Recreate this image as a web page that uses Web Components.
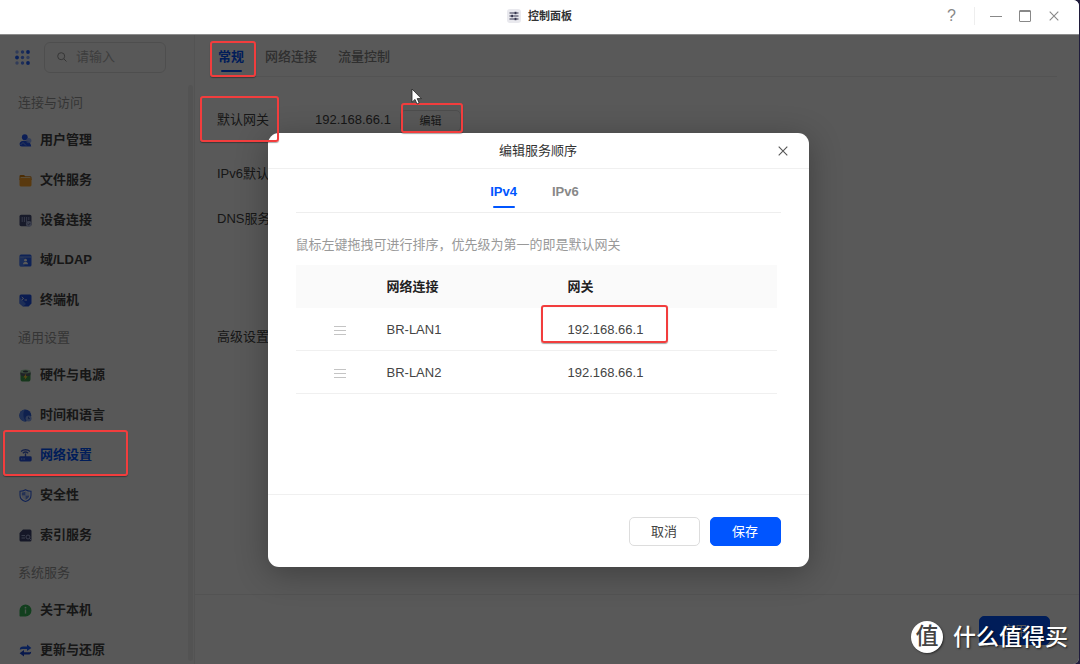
<!DOCTYPE html>
<html lang="zh-CN">
<head>
<meta charset="utf-8">
<title>控制面板</title>
<style>
    body{
        margin: 0;
        background: #201c3c;
        font-family: "Liberation Sans", "Noto Sans CJK SC", sans-serif;
        font-size: 13px;
        line-height: 20px;
        color: #333;
    }
</style>
</head>
<body>
<control-panel></control-panel>

<script>
const ICONS = {
    apps: `<svg viewBox="0 0 15 15" width="15" height="15"><g fill="#1f5eff">
        <circle cx="2" cy="2" r="1.7" opacity=".5"/><circle cx="7.5" cy="2" r="1.7" opacity=".75"/><circle cx="13" cy="2" r="1.9"/>
        <circle cx="2" cy="7.5" r="1.9"/><circle cx="7.5" cy="7.5" r="1.7" opacity=".75"/><circle cx="13" cy="7.5" r="1.7" opacity=".5"/>
        <circle cx="2" cy="13" r="1.7" opacity=".5"/><circle cx="7.5" cy="13" r="1.7" opacity=".75"/><circle cx="13" cy="13" r="1.9"/></g></svg>`,
    search: `<svg viewBox="0 0 10 10" width="10" height="10" fill="none" stroke="#999"><circle cx="4.2" cy="4.2" r="3.5"/><path d="M6.8 6.8L9.5 9.5"/></svg>`,
    panel: `<svg viewBox="0 0 14 14" width="14" height="14"><rect width="14" height="14" rx="3" fill="#e9e9ee"/>
        <g stroke="#34344c" stroke-width="1.1"><path d="M2.5 4H11.5M2.5 7H11.5M2.5 10H11.5"/></g>
        <g fill="#34344c"><rect x="7.6" y="2.8" width="1.8" height="2.4"/><rect x="4.2" y="5.8" width="1.8" height="2.4"/><rect x="7.6" y="8.8" width="1.8" height="2.4"/></g></svg>`,
    user: `<svg viewBox="0 0 13 13" width="13" height="13"><circle cx="5.8" cy="3.2" r="2.9" fill="#2358f5"/>
        <path d="M.6 10.2C.6 7.5 3 6.8 5.8 6.8S11.8 8 12.2 12.5H2.8A2.2 2.2 0 0 1 .6 10.2z" fill="#2358f5"/>
        <circle cx="9.8" cy="6.6" r="2.6" fill="#7fa4ff" opacity=".8"/><path d="M1.5 11L4 8.5L7 11.5" fill="none" stroke="#7fa4ff"/></svg>`,
    folder: `<svg viewBox="0 0 13 13" width="13" height="13"><path d="M.5 2.3A1.3 1.3 0 0 1 1.8 1H5l1.3 1.2H11.2a1.3 1.3 0 0 1 1.3 1.3V6H.5z" fill="#d98011"/>
        <rect x="1.5" y="3" width="10" height="3" fill="#ffe0a3"/><rect x=".5" y="4" width="12" height="8.4" rx="1.3" fill="#ffa42b"/></svg>`,
    device: `<svg viewBox="0 0 13 13" width="13" height="13"><rect x=".5" y=".8" width="12" height="11.4" rx="1.6" fill="#454d78"/>
        <path d="M3.2 3V8M5.4 3V8M7.6 3V8M9.8 3V6" stroke="#9aa4d0"/><circle cx="9.8" cy="9.8" r="2.9" fill="#a9b4dc"/><path d="M8.5 10L9.6 11L11.2 9" fill="none" stroke="#454d78" stroke-width=".8"/></svg>`,
    domain: `<svg viewBox="0 0 13 13" width="13" height="13"><rect x=".5" y=".5" width="12" height="12" rx="1.5" fill="#2a62f5"/><rect x=".5" y="3" width="5" height="9.5" rx="1.5" fill="#5f93ff" opacity=".7"/>
        <path d="M.5 3H12.5" stroke="#8fb1ff"/><circle cx="6.5" cy="6.2" r="1.4" fill="#fff"/><path d="M4 10.2C4 8.3 5 7.9 6.5 7.9S9 8.3 9 10.2z" fill="#fff"/></svg>`,
    terminal: `<svg viewBox="0 0 13 13" width="13" height="13"><path d="M2 .5H11A1.5 1.5 0 0 1 12.5 2V9.5L9.5 12.5H4L.5 9.5V2A1.5 1.5 0 0 1 2 .5z" fill="#1e50e8"/>
        <path d="M.5 3V9.5L4 12.5L7 10z" fill="#6c9aff" opacity=".7"/><path d="M2.7 3L4.6 4.5L2.7 6M5.5 6H8" fill="none" stroke="#fff" stroke-width=".9"/></svg>`,
    battery: `<svg viewBox="0 0 13 13" width="13" height="13"><rect x="1.5" y="2" width="10" height="10.5" rx="2.6" fill="#3f9d50"/><rect x="1.5" y="2" width="10" height="5" rx="2" fill="#5a6470"/>
        <ellipse cx="6.5" cy="2.5" rx="5" ry="1.9" fill="#a6d9b0"/><ellipse cx="6.5" cy="2.5" rx="2.6" ry=".9" fill="#44525c"/><path d="M7.2 4.6L4.4 8.4H6.2L5.6 11L8.6 7.2H6.8z" fill="#ffd23c"/></svg>`,
    globe: `<svg viewBox="0 0 13 13" width="13" height="13"><circle cx="6.3" cy="6.5" r="6" fill="#2c5fe0"/><path d="M.4 6.5A6 6 0 0 1 6 .5C3.5 4 4 9 7 12.4A6 6 0 0 1 .4 6.5z" fill="#5c8cf5"/>
        <circle cx="9.6" cy="9.4" r="3" fill="#8aabf5"/><path d="M9.5 7.8V9.6H10.9" fill="none" stroke="#2450c0" stroke-width=".8"/></svg>`,
    router: `<svg viewBox="0 0 13 13" width="13" height="13"><path d="M2 2.4C4.4 .2 8.6 .2 11 2.4M3.8 4.2C5.3 2.9 7.7 2.9 9.2 4.2" fill="none" stroke="#3b5fd0" stroke-width="1.3"/>
        <path d="M6.5 4.4V8" stroke="#3b5fd0" stroke-width="1.4"/><rect x=".3" y="7.3" width="12.4" height="5.2" rx="1.4" fill="#2555e6"/><path d="M2 10H3.4M4.4 10H5.8" stroke="#b4c9ff" stroke-width="1.2"/></svg>`,
    shield: `<svg viewBox="0 0 13 13" width="13" height="13"><path d="M6.5 .7C8.2 1.8 10 2.2 12 2.3V6.2C12 9.4 9.5 11.6 6.5 12.5C3.5 11.6 1 9.4 1 6.2V2.3C3 2.2 4.8 1.8 6.5 .7z" fill="none" stroke="#3566f0" stroke-width="1.1"/>
        <path d="M6.5 2.6V6.5H2.8V3.6C4.2 3.5 5.4 3.2 6.5 2.6zM6.5 6.5H10.2C10.1 8.6 8.5 10 6.5 10.7z" fill="#6a90f0"/><path d="M6.5 2.6C7.6 3.2 8.8 3.5 10.2 3.6V6.5H6.5zM6.5 10.7C4.5 10 2.9 8.6 2.8 6.5H6.5z" fill="#a9c0ff" opacity=".5"/></svg>`,
    index: `<svg viewBox="0 0 13 13" width="13" height="13"><path d="M4 .5H11A1.5 1.5 0 0 1 12.5 2V11A1.5 1.5 0 0 1 11 12.5H2A1.5 1.5 0 0 1 .5 11V4z" fill="#3c4470"/>
        <path d="M2.5 6.6H6M2.5 9H6" stroke="#aab3dc"/><circle cx="9" cy="8" r="2" fill="none" stroke="#aab3dc"/><path d="M10.4 9.5L12 11" stroke="#aab3dc"/></svg>`,
    about: `<svg viewBox="0 0 13 13" width="13" height="13"><path d="M6.5 .5A6 6 0 1 1 6.5 12.5H1.2A.7 .7 0 0 1 .5 11.8V6.5A6 6 0 0 1 6.5 .5z" fill="#35b558"/><circle cx="6.5" cy="3.7" r=".9" fill="#d5f5dc"/><path d="M6.5 5.4V9.6" stroke="#d5f5dc" stroke-width="1.3"/></svg>`,
    update: `<svg viewBox="0 0 13 13" width="13" height="13"><path d="M.8 5.8C.8 3.6 2 2.6 4.2 2.6H8V.5L12.4 3.9L8 7V4.9H4.2C2.6 4.9 1.7 5 .8 5.8z" fill="#1f5eff"/>
        <path d="M12.2 7.4C12.2 9.6 11 10.5 8.8 10.5H5V12.6L.6 9.3L5 6.1V8.2H8.8C10.4 8.2 11.3 8.1 12.2 7.4z" fill="#1746d8"/></svg>`,
    minimize: `<svg viewBox="0 0 12 12" width="12" height="12"><path d="M0 6.5H12" stroke="#888"/></svg>`,
    maximize: `<svg viewBox="0 0 12 12" width="12" height="12" fill="none" stroke="#888"><rect x=".5" y=".5" width="11" height="11" rx=".5"/><path d="M.5 1.5H11.5"/></svg>`,
    close: `<svg viewBox="0 0 10 10" width="10" height="10"><path d="M.7 .7L9.3 9.3M9.3 .7L.7 9.3" stroke="currentColor" stroke-width="1.1"/></svg>`,
    drag: `<svg viewBox="0 0 12 9" width="12" height="9"><path d="M0 .5H12M0 4.5H12M0 8.5H12" stroke="#c4c4c4"/></svg>`,
    pointer: `<svg viewBox="0 0 12 18" width="12" height="18"><path d="M1 1V14.2L4 11.4L6 16L8.2 15L6.2 10.6H10.4z" fill="#fff" stroke="#222" stroke-width=".8"/></svg>`
};

class AppIcon extends HTMLElement {
    constructor(){
        super()
        this._shadowRoot = this.attachShadow({mode: 'open'});
    }

    connectedCallback(){
        this._shadowRoot.innerHTML = `
    <style>
        :host{ display: inline-flex; flex: none; vertical-align: middle; }
        svg{ display: block; }
    </style>
    ${ICONS[this.getAttribute('name')] || ''}`
    }
}

class TitleBar extends HTMLElement {
    constructor(){
        super()
        this._shadowRoot = this.attachShadow({mode: 'open'});
        this._shadowRoot.innerHTML = `
    <style>
        :host{
            display: grid;
            grid-template-columns: 1fr auto 1fr;
            align-items: center;
            height: 35px;
            padding-bottom: 2px;
            background: #fff;
            border-bottom: 1px solid #8c8c8c;
            box-sizing: border-box;
        }
        .title{
            grid-column: 2;
            display: flex;
            align-items: center;
            gap: 7px;
            font-size: 11px;
            font-weight: 600;
        }
        .tools{
            display: flex;
            justify-content: flex-end;
            align-items: center;
            padding-right: 14px;
        }
        button{
            display: flex;
            justify-content: center;
            align-items: center;
            width: 29px;
            height: 24px;
            padding: 0;
            border: 0;
            background: none;
            color: #888;
            font: 16px "Liberation Sans", sans-serif;
        }
        button:last-child{ width: 22px; margin-left: 4px; }
        i{ width: 1px; height: 18px; margin: 0 6px 0 8px; background: #eee; }
    </style>
    <div class="title"><app-icon name="panel"></app-icon><slot></slot></div>
    <div class="tools">
        <button>?</button><i></i>
        <button aria-label="最小化"><app-icon name="minimize"></app-icon></button>
        <button aria-label="最大化"><app-icon name="maximize"></app-icon></button>
        <button aria-label="关闭"><app-icon name="close"></app-icon></button>
    </div>`
    }
}

class NavItem extends HTMLElement {
    constructor(){
        super()
        this._shadowRoot = this.attachShadow({mode: 'open'});
    }

    connectedCallback(){
        this._shadowRoot.innerHTML = `
    <style>
        :host{ display: block; }
        a{
            display: flex;
            align-items: center;
            gap: 8px;
            height: 40px;
            padding-left: 19px;
            color: #444;
            font-weight: 600;
            text-decoration: none;
        }
        :host([active]) a{ color: #0055ff; }
    </style>
    <a href="#"><app-icon name="${this.getAttribute('icon')}"></app-icon><slot></slot></a>`
    }
}

class NavGroup extends HTMLElement {
    constructor(){
        super()
        this._shadowRoot = this.attachShadow({mode: 'open'});
    }

    connectedCallback(){
        this._shadowRoot.innerHTML = `
    <style>
        :host{ display: block; }
        .label{
            padding-left: 18px;
            line-height: 35px;
            color: #999;
        }
    </style>
    <div class="label">${this.getAttribute('label')}</div>
    <slot></slot>`
    }
}

class SideNav extends HTMLElement {
    constructor(){
        super()
        this._shadowRoot = this.attachShadow({mode: 'open'});
        this._shadowRoot.innerHTML = `
    <style>
        :host{
            display: flex;
            flex-direction: column;
            width: 194px;
            flex: none;
            min-height: 0;
            background: #fcfcfc;
            border-right: 1px solid #eee;
        }
        .top{
            display: flex;
            align-items: center;
            gap: 14px;
            height: 50px;
            padding: 0 28px 6px 15px;
            box-sizing: border-box;
            flex: none;
        }
        label{
            display: flex;
            align-items: center;
            gap: 9px;
            flex: 1;
            min-width: 0;
            height: 31px;
            padding: 0 12px;
            border: 1px solid #e0e0e0;
            border-radius: 6px;
            box-sizing: border-box;
        }
        input{
            width: 100%;
            min-width: 0;
            padding: 0;
            border: 0;
            outline: 0;
            background: none;
            font: inherit;
        }
        input::placeholder{ color: #b0b0b0; }
        .list{
            display: flex;
            flex: 1;
            min-height: 0;
        }
        nav{ flex: 1; overflow: hidden; }
        .thumb{
            width: 5px;
            margin: 0 1px 3px 0;
            border-radius: 3px;
            background: #eee;
        }
    </style>
    <div class="top">
        <app-icon name="apps"></app-icon>
        <label><app-icon name="search"></app-icon><input type="text" placeholder="请输入" aria-label="请输入"></label>
    </div>
    <div class="list">
        <nav><slot></slot></nav>
        <div class="thumb"></div>
    </div>`
    }
}

class TabItem extends HTMLElement {
    constructor(){
        super()
        this._shadowRoot = this.attachShadow({mode: 'open'});
        this._shadowRoot.innerHTML = `
    <style>
        :host{ display: flex; }
        button{
            position: relative;
            padding: 2px 0 0;
            border: 0;
            background: none;
            color: #888;
            font: inherit;
            font-weight: var(--tab-weight, 400);
        }
        :host([active]) button{ color: #0055ff; font-weight: 600; }
        :host([active]) button::after{
            content: "";
            position: absolute;
            left: 3px;
            right: 2px;
            bottom: 4px;
            height: 2px;
            border-radius: 1px;
            background: #0055ff;
        }
    </style>
    <button role="tab"><slot></slot></button>`
    }
}

class TabBar extends HTMLElement {
    constructor(){
        super()
        this._shadowRoot = this.attachShadow({mode: 'open'});
        this._shadowRoot.innerHTML = `
    <style>
        :host{
            display: flex;
            gap: 21px;
            height: 43px;
            border-bottom: 1px solid #eee;
        }
    </style>
    <slot></slot>`
    }
}

class SettingRow extends HTMLElement {
    constructor(){
        super()
        this._shadowRoot = this.attachShadow({mode: 'open'});
    }

    connectedCallback(){
        this._shadowRoot.innerHTML = `
    <style>
        :host{
            display: flex;
            align-items: flex-start;
            min-height: 30px;
            line-height: 30px;
            color: #444;
        }
        .label{ width: 98px; }
    </style>
    <div class="label">${this.getAttribute('label')}</div>
    <slot></slot>`
    }
}

class UiButton extends HTMLElement {
    constructor(){
        super()
        this._shadowRoot = this.attachShadow({mode: 'open'});
        this._shadowRoot.innerHTML = `
    <style>
        :host{ display: inline-flex; }
        button{
            width: 71px;
            height: 29px;
            padding: 0;
            border: 1px solid #ddd;
            border-radius: 5px;
            background: #fff;
            color: #444;
            font: inherit;
            line-height: 20px;
        }
        :host([primary]) button{ border-color: #0055ff; background: #0055ff; color: #fff; }
        :host([small]) button{ width: 61px; height: 22px; font-size: 11px; }
    </style>
    <button><slot></slot></button>`
    }
}

class ServiceTable extends HTMLElement {
    constructor(){
        super()
        this._shadowRoot = this.attachShadow({mode: 'open'});
        const rows = [['BR-LAN1', '192.168.66.1'], ['BR-LAN2', '192.168.66.1']];
        this._shadowRoot.innerHTML = `
    <style>
        :host{ display: block; }
        table{
            width: 100%;
            table-layout: fixed;
            border-collapse: separate;
            border-spacing: 0;
        }
        th, td{
            height: 40px;
            padding: 2px 0 0;
            border-bottom: 1px solid #f0f0f0;
            text-align: left;
            color: #444;
        }
        th{ background: #fafafa; border-color: #fafafa; color: #222; }
        .handle{ width: 91px; }
        .name{ width: 181px; }
        td:first-child{ padding-right: 3px; text-align: center; }
    </style>
    <table>
        <thead><tr><th class="handle"></th><th class="name">网络连接</th><th>网关</th></tr></thead>
        <tbody>
            ${rows.map(([name, ip]) => `<tr><td><app-icon name="drag"></app-icon></td><td>${name}</td><td>${ip}</td></tr>`).join('')}
        </tbody>
    </table>`
    }
}

class ModalDialog extends HTMLElement {
    constructor(){
        super()
        this._shadowRoot = this.attachShadow({mode: 'open'});
    }

    connectedCallback(){
        this._shadowRoot.innerHTML = `
    <style>
        :host{
            display: flex;
            justify-content: center;
            align-items: center;
            background: rgba(0, 0, 0, .65);
        }
        .box{
            width: 541px;
            max-width: 100%;
            border-radius: 11px;
            background: #fff;
            box-shadow: 0 6px 32px rgba(0, 0, 0, .3);
        }
        header{
            display: grid;
            grid-template-columns: 1fr auto 1fr;
            align-items: center;
            height: 35px;
            padding: 0 20px;
            border-bottom: 1px solid #f0f0f0;
        }
        h2{
            grid-column: 2;
            margin: 0;
            font-size: 13px;
            font-weight: 400;
        }
        .close{
            justify-self: end;
            padding: 1px;
            border: 0;
            background: none;
            color: #555;
        }
        .body{ min-height: 325px; padding: 0 28px; }
        footer{
            display: flex;
            justify-content: flex-end;
            gap: 10px;
            padding: 22px 28px 21px;
            border-top: 1px solid #f0f0f0;
        }
    </style>
    <div class="box" role="dialog" aria-label="${this.getAttribute('heading')}">
        <header>
            <h2>${this.getAttribute('heading')}</h2>
            <button class="close" aria-label="关闭"><app-icon name="close"></app-icon></button>
        </header>
        <div class="body"><slot></slot></div>
        <footer><slot name="actions"></slot></footer>
    </div>`
    }
}

class MarkBox extends HTMLElement {
    constructor(){
        super()
        this._shadowRoot = this.attachShadow({mode: 'open'});
        this._shadowRoot.innerHTML = `
    <style>
        :host{
            position: absolute;
            box-sizing: border-box;
            border: 2px solid #f23d3d;
            border-radius: 3px;
            box-shadow: 0 1px 1px rgba(0, 0, 0, .35);
            pointer-events: none;
        }
    </style>`
    }
}

class SiteStamp extends HTMLElement {
    constructor(){
        super()
        this._shadowRoot = this.attachShadow({mode: 'open'});
        this._shadowRoot.innerHTML = `
    <style>
        :host{
            display: flex;
            align-items: center;
            gap: 10px;
            color: #fff;
            font-size: 23px;
            font-weight: 500;
            line-height: 32px;
            text-shadow: 1px 1px 2px rgba(0, 0, 0, .7);
        }
        .seal{
            width: 32px;
            height: 32px;
            border-radius: 50%;
            background: #fff;
            color: #444;
            line-height: 31px;
            text-align: center;
            text-shadow: none;
            box-shadow: 1px 1px 2px rgba(0, 0, 0, .5);
        }
    </style>
    <div class="seal">值</div>
    <div><slot></slot></div>`
    }
}

class ControlPanel extends HTMLElement {
    constructor(){
        super()
        this._shadowRoot = this.attachShadow({mode: 'open'});
        this._shadowRoot.innerHTML = `
    <style>
        :host{
            position: relative;
            display: flex;
            flex-direction: column;
            height: 100vh;
            overflow: hidden;
        }
        .window{
            display: flex;
            flex-direction: column;
            flex: 1;
            min-height: 0;
            margin-right: 1px;
            border-radius: 0 6px 6px 0;
            overflow: hidden;
            background: #fff;
        }
        .content{
            position: relative;
            display: flex;
            flex: 1;
            min-height: 0;
        }
        main{
            display: flex;
            flex-direction: column;
            flex: 1;
            min-width: 0;
        }
        main tab-bar{ height: 41px; margin: 0 22px; padding-left: 1px; --tab-weight: 500; }
        .rows{ flex: 1; padding: 28px 22px 0; }
        .rows setting-row{ margin-bottom: 15px; }
        .rows setting-row:first-child{ margin-bottom: 24px; }
        .rows .tall{ min-height: 103px; }
        .rows ui-button{ margin: 5px 0 0 9px; }
        .foot{
            display: flex;
            justify-content: flex-end;
            padding: 21px 29px 19px;
            border-top: 1px solid #eee;
        }
        modal-dialog{ position: absolute; inset: 0; padding-right: 3px; padding-top: 1px; box-sizing: border-box; }
        modal-dialog tab-bar{ justify-content: center; gap: 35px; padding-right: 7px; --tab-weight: 600; }
        .hint{ margin: 22px 0 10px; color: #999; white-space: nowrap; }
        service-table{ margin-right: 4px; }
        .pointer{ position: absolute; left: 411px; top: 88px; }
        site-stamp{ position: absolute; right: 12px; bottom: 11px; }
    </style>
    <div class="window">
        <title-bar>控制面板</title-bar>
        <div class="content">
            <side-nav>
                <nav-group label="连接与访问">
                    <nav-item icon="user">用户管理</nav-item>
                    <nav-item icon="folder">文件服务</nav-item>
                    <nav-item icon="device">设备连接</nav-item>
                    <nav-item icon="domain">域/LDAP</nav-item>
                    <nav-item icon="terminal">终端机</nav-item>
                </nav-group>
                <nav-group label="通用设置">
                    <nav-item icon="battery">硬件与电源</nav-item>
                    <nav-item icon="globe">时间和语言</nav-item>
                    <nav-item icon="router" active>网络设置</nav-item>
                    <nav-item icon="shield">安全性</nav-item>
                    <nav-item icon="index">索引服务</nav-item>
                </nav-group>
                <nav-group label="系统服务">
                    <nav-item icon="about">关于本机</nav-item>
                    <nav-item icon="update">更新与还原</nav-item>
                </nav-group>
            </side-nav>
            <main>
                <tab-bar>
                    <tab-item active>常规</tab-item>
                    <tab-item>网络连接</tab-item>
                    <tab-item>流量控制</tab-item>
                </tab-bar>
                <div class="rows">
                    <setting-row label="默认网关">192.168.66.1<ui-button small>编辑</ui-button></setting-row>
                    <setting-row label="IPv6默认"></setting-row>
                    <setting-row class="tall" label="DNS服务"></setting-row>
                    <setting-row label="高级设置"></setting-row>
                </div>
                <div class="foot"><ui-button primary>应用</ui-button></div>
            </main>
            <modal-dialog heading="编辑服务顺序">
                <tab-bar>
                    <tab-item active>IPv4</tab-item>
                    <tab-item>IPv6</tab-item>
                </tab-bar>
                <p class="hint">鼠标左键拖拽可进行排序，优先级为第一的即是默认网关</p>
                <service-table></service-table>
                <ui-button slot="actions">取消</ui-button>
                <ui-button slot="actions" primary>保存</ui-button>
            </modal-dialog>
        </div>
    </div>
    <mark-box style="left: 210px; top: 41px; width: 46px; height: 36px"></mark-box>
    <mark-box style="left: 200px; top: 96px; width: 79px; height: 46px"></mark-box>
    <mark-box style="left: 401px; top: 103px; width: 62px; height: 30px"></mark-box>
    <mark-box style="left: 3px; top: 430px; width: 125px; height: 46px"></mark-box>
    <mark-box style="left: 541px; top: 305px; width: 127px; height: 38px"></mark-box>
    <app-icon class="pointer" name="pointer"></app-icon>
    <site-stamp>什么值得买</site-stamp>`
    }
}

window.customElements.define('app-icon', AppIcon);
window.customElements.define('title-bar', TitleBar);
window.customElements.define('nav-item', NavItem);
window.customElements.define('nav-group', NavGroup);
window.customElements.define('side-nav', SideNav);
window.customElements.define('tab-item', TabItem);
window.customElements.define('tab-bar', TabBar);
window.customElements.define('setting-row', SettingRow);
window.customElements.define('ui-button', UiButton);
window.customElements.define('service-table', ServiceTable);
window.customElements.define('modal-dialog', ModalDialog);
window.customElements.define('mark-box', MarkBox);
window.customElements.define('site-stamp', SiteStamp);
window.customElements.define('control-panel', ControlPanel);
</script>
</body>
</html>
